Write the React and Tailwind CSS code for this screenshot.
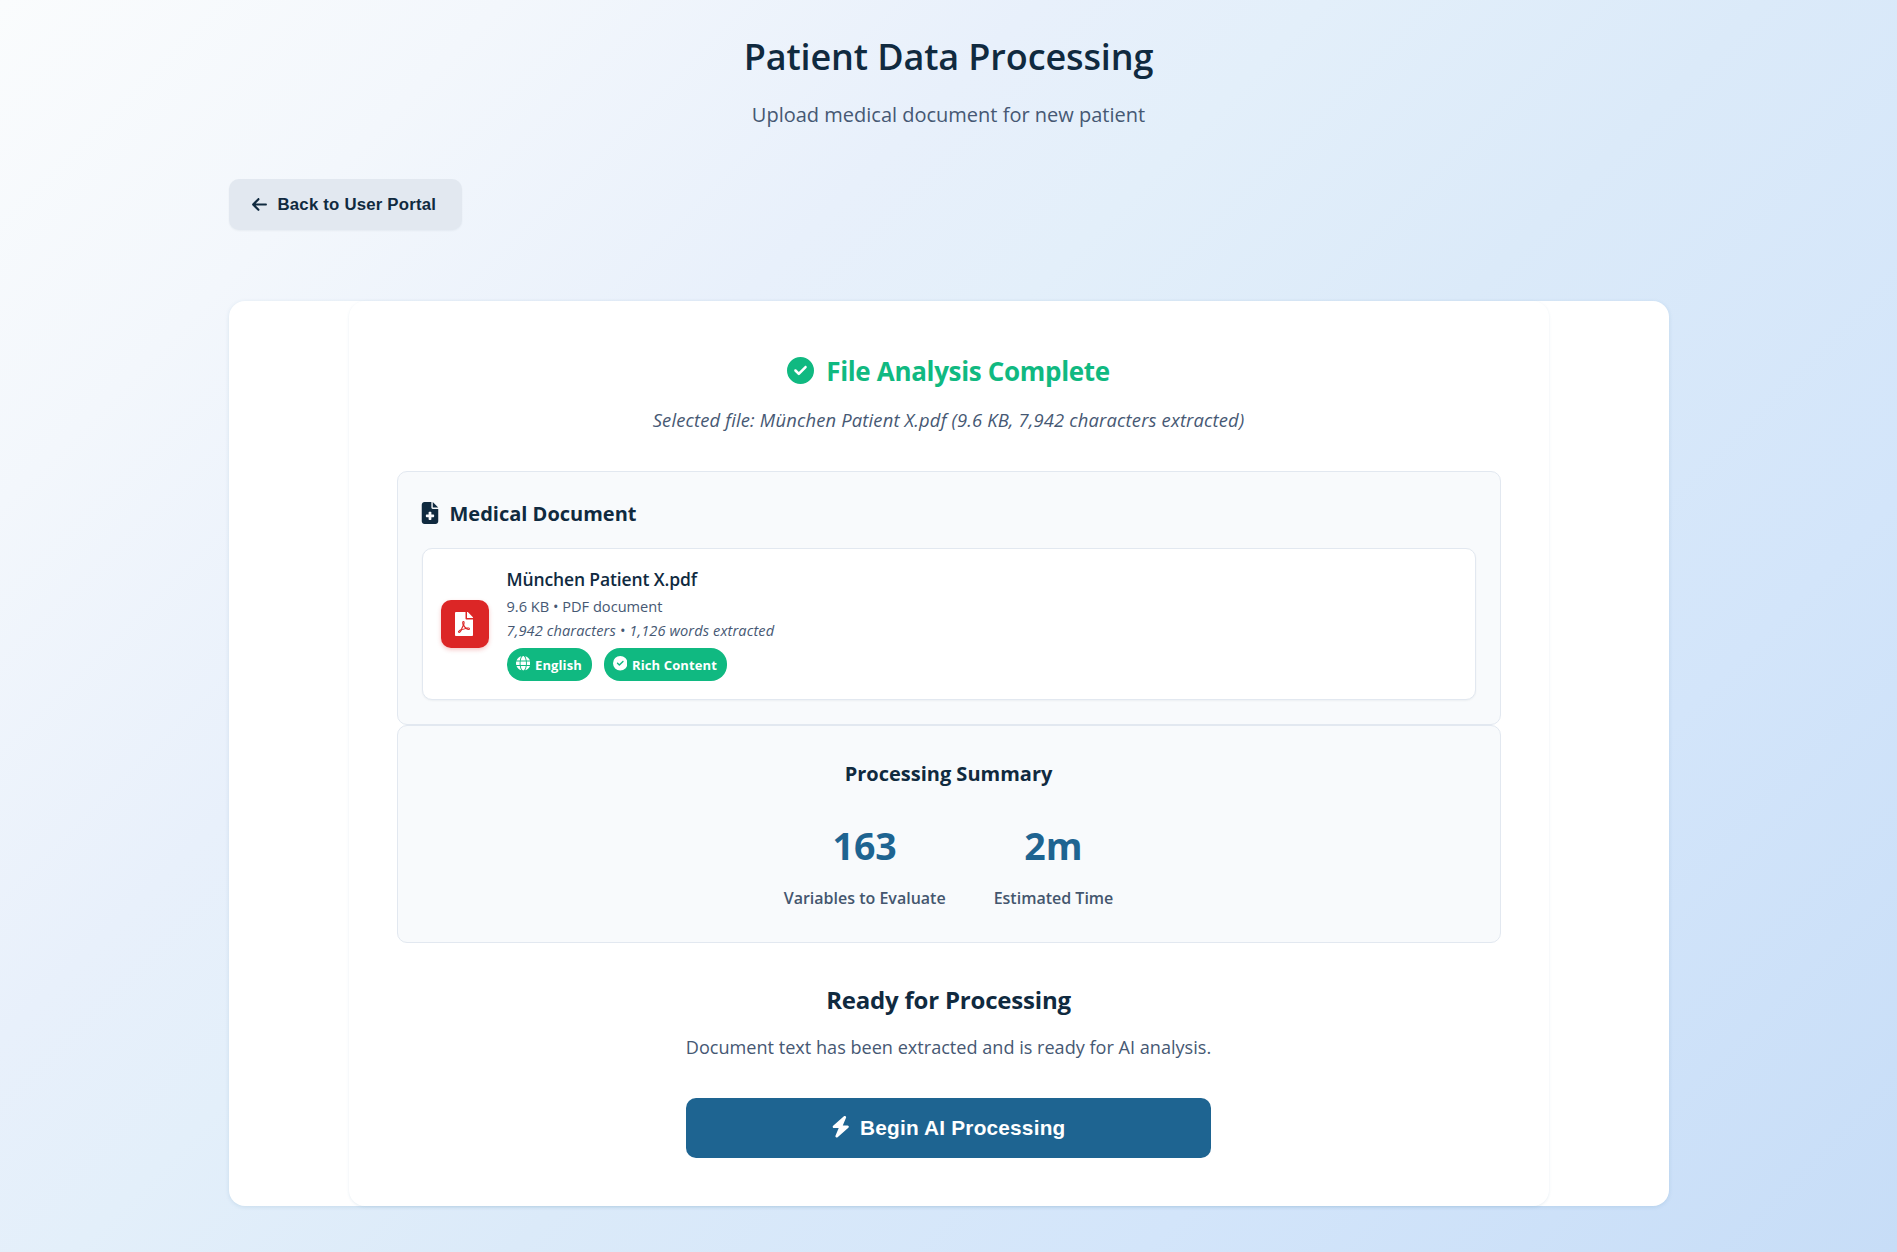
import { FaArrowLeft, FaBolt, FaCircleCheck, FaFileMedical, FaGlobe } from "react-icons/fa6";
import { FaFilePdf } from "react-icons/fa";

function Badge({ icon: Icon, className, children }) {
  return (
    <span className={`flex h-[33px] items-center gap-[5px] rounded-2xl bg-[#10b981] pl-[9px] text-[13px] leading-[20px] font-bold tracking-[0.12px] text-white ${className}`}>
      <Icon className="mb-px size-[14.5px] shrink-0" />
      <span className="relative top-px whitespace-nowrap">{children}</span>
    </span>
  );
}

function Stat({ value, label }) {
  return (
    <div className="flex flex-col items-center">
      <div className="text-[37.5px] leading-[52px] font-bold text-[#1e6491]">{value}</div>
      <div className="mt-[13px] text-[16px] leading-[26px] font-semibold whitespace-nowrap text-[#44566e]">{label}</div>
    </div>
  );
}

export default function App() {
  return (
    <div className="h-[1252px] overflow-hidden bg-[linear-gradient(135deg,#fafcfd_0%,#f3f7fc_16%,#e8f0fb_33%,#e3effa_42%,#dbeaf9_56%,#d3e5fa_76%,#c7ddf7_100%)] font-['Open_Sans',sans-serif] text-[#102a3f]">
      <div className="mx-auto w-[1440px] pt-[33px]">
        <header className="text-center">
          <h1 className="text-[36px] leading-[48px] font-semibold tracking-[-0.12px]">Patient Data Processing</h1>
          <p className="mt-[19px] text-[20px] leading-[30px] text-[#465873]">Upload medical document for new patient</p>
        </header>

        <button className="mt-[49px] flex h-[51px] w-[233px] items-center rounded-[10px] bg-[#e2e8f0] pl-[22.5px] font-['Liberation_Sans',sans-serif] text-[16.8px] font-bold tracking-[0.2px] shadow-[0_1px_2px_rgba(16,42,67,0.05)]">
          <FaArrowLeft className="mr-[9.5px] size-[17px] shrink-0" />
          <span className="whitespace-nowrap">Back to User Portal</span>
        </button>

        <main className="mt-[71px] h-[905px] rounded-2xl bg-white shadow-[0_1px_4px_rgba(30,100,145,0.13)]">
          <div className="mx-auto flex h-full w-[1200px] flex-col items-center rounded-2xl bg-white px-12 pt-[50px] shadow-[0_1px_3px_rgba(30,100,145,0.1)]">
            <h2 className="flex text-[26px] leading-[40px] font-bold tracking-[-0.33px] text-[#10b981]">
              <FaCircleCheck className="mt-[5.5px] mr-[12px] size-[27px]" />
              File Analysis Complete
            </h2>
            <p className="mt-[14px] text-[18.4px] leading-[30px] tracking-[0.16px] whitespace-nowrap text-[#465873] italic">
              Selected file: München Patient X.pdf (9.6 KB, 7,942 characters extracted)
            </p>

            <section className="mt-[36px] h-[254px] w-full rounded-[10px] border border-[#e2e8f0] bg-[#f8fafc] px-[24px] pt-[26px]">
              <h3 className="flex text-[20px] leading-[30px] font-bold">
                <FaFileMedical className="mt-[3.5px] mr-[9px] -ml-[3px] size-[22px]" />
                <span className="relative top-px">Medical Document</span>
              </h3>
              <div className="mt-[20px] flex h-[152px] items-center rounded-[10px] border border-[#e2e8f0] bg-white pl-[18px] shadow-[0_1px_2px_rgba(16,42,67,0.05)]">
                <div className="flex size-[48px] items-center justify-center rounded-[10px] bg-[#dc2626] shadow-[0_2px_4px_rgba(220,38,38,0.25)]">
                  <FaFilePdf className="mr-px mb-px size-[24px] text-white" />
                </div>
                <div className="mb-[2px] ml-[18px]">
                  <div className="text-[17.5px] leading-[26px] font-semibold tracking-[-0.13px]">München Patient X.pdf</div>
                  <div className="mt-[2px] text-[14.6px] leading-[24px] text-[#465873]">9.6 KB • PDF document</div>
                  <div className="text-[14.6px] leading-[24px] tracking-[0.11px] text-[#465873] italic">7,942 characters • 1,126 words extracted</div>
                  <div className="mt-[6px] flex gap-[12px]">
                    <Badge icon={FaGlobe} className="w-[85px]">English</Badge>
                    <Badge icon={FaCircleCheck} className="w-[123px]">Rich Content</Badge>
                  </div>
                </div>
              </div>
            </section>

            <section className="flex h-[218px] w-full flex-col items-center rounded-[10px] border border-[#e2e8f0] bg-[#f8fafc] pt-[33px]">
              <h3 className="text-[20px] leading-[30px] font-bold">Processing Summary</h3>
              <div className="mt-[31px] flex gap-12">
                <Stat value="163" label="Variables to Evaluate" />
                <Stat value="2m" label="Estimated Time" />
              </div>
            </section>

            <h2 className="mt-[39px] text-[24px] leading-[36px] font-bold tracking-[-0.2px]">Ready for Processing</h2>
            <p className="mt-[14px] text-[18.1px] leading-[30px] whitespace-nowrap text-[#465873]">
              Document text has been extracted and is ready for AI analysis.
            </p>
            <button className="mt-[36px] flex h-[60px] w-[525px] shrink-0 items-center justify-center rounded-[10px] bg-[#1e6491] pr-[2px] font-['Liberation_Sans',sans-serif] text-[20.8px] font-bold tracking-[0.01em] text-white">
              <FaBolt className="mr-[9px] mb-[2px] size-[21.5px]" />
              Begin AI Processing
            </button>
          </div>
        </main>
      </div>
    </div>
  );
}
